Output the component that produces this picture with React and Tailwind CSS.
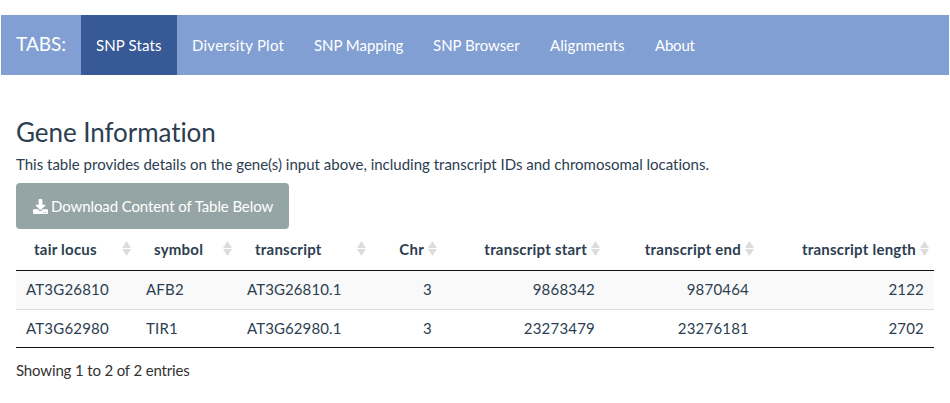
import { FaDownload } from "react-icons/fa";

const tabs = [
  { name: "SNP Stats", style: "w-[96px] tracking-[0.12px]" },
  { name: "Diversity Plot", style: "w-[122px] tracking-[0.25px]" },
  { name: "SNP Mapping", style: "w-[119px] tracking-[-0.05px]" },
  { name: "SNP Browser", style: "w-[117px]" },
  { name: "Alignments", style: "w-[105px] tracking-[0.08px]" },
  { name: "About", style: "w-[70px] tracking-[-0.2px]" },
];

const columns = [
  { name: "tair locus", width: "w-[120px]" },
  { name: "symbol", width: "w-[101px]" },
  { name: "transcript", width: "w-[134px]" },
  { name: "Chr", width: "w-[71px]", right: true },
  { name: "transcript start", width: "w-[163px]", right: true },
  { name: "transcript end", width: "w-[154px]", right: true },
  { name: "transcript length", width: "w-[175px]", right: true },
];

const rows = [
  ["AT3G26810", "AFB2", "AT3G26810.1", "3", "9868342", "9870464", "2122"],
  ["AT3G62980", "TIR1", "AT3G62980.1", "3", "23273479", "23276181", "2702"],
];

function SortIcon() {
  return (
    <svg className="absolute right-[5px] top-[12px]" width="9" height="15" viewBox="0 0 9 15" fill="#dcdcdc">
      <path d="M4.5 0L9 7H0zM0 8H9L4.5 15z" />
    </svg>
  );
}

export default function App() {
  return (
    <div className="h-[403px] overflow-hidden bg-white pt-[15px] font-['Lato',sans-serif] text-[15px] leading-[21px] text-[#2c3e50] [font-variant-ligatures:none]">
      <nav className="mx-px flex h-[60px] bg-[#819fd2] text-white">
        <span className="w-[80px] pl-[15px] pt-[18px] text-[19px]">TABS:</span>
        {tabs.map((t, i) => (
          <a key={t.name} className={`whitespace-nowrap pl-[15px] pt-[20px] ${t.style} ${i === 0 ? "bg-[#375a96]" : ""}`}>{t.name}</a>
        ))}
      </nav>
      <main className="px-4">
        <h2 className="pt-[43px] text-[26px] leading-[29px] tracking-[-0.06px]">Gene Information</h2>
        <p className="mt-[7px]">This table provides details on the gene(s) input above, including transcript IDs and chromosomal locations.</p>
        <button className="mt-[8px] flex h-[46px] w-[273px] items-center gap-[3px] whitespace-nowrap rounded bg-[#95a5a6] pl-[17px] tracking-[-0.1px] text-white">
          <FaDownload size={15} />
          Download Content of Table Below
        </button>
        <table className="w-[918px] table-fixed border-separate border-spacing-0">
          <thead>
            <tr>
              {columns.map((c) => (
                <th key={c.name} className={`relative h-[42px] border-b border-[#111] pl-[18px] pr-[18px] font-bold tracking-[0.23px] ${c.width} ${c.right ? "text-right" : "text-left"}`}>
                  {c.name}
                  <SortIcon />
                </th>
              ))}
            </tr>
          </thead>
          <tbody>
            {rows.map((r, i) => (
              <tr key={r[0]} className={i === 0 ? "bg-[#f9f9f9]" : "bg-white"}>
                {r.map((v, j) => (
                  <td key={j} className={`px-[10px] ${i === 0 ? "h-[38px] pb-[2px]" : "h-[39px] border-t border-b border-t-[#ddd] border-b-[#111]"} ${j > 2 ? "text-right" : "text-left"} ${j === 2 ? "tracking-[0.1px]" : "tracking-[0.2px]"}`}>{v}</td>
                ))}
              </tr>
            ))}
          </tbody>
        </table>
        <p className="mt-[12px] tracking-[-0.15px] text-[#333]">Showing 1 to 2 of 2 entries</p>
      </main>
    </div>
  );
}
